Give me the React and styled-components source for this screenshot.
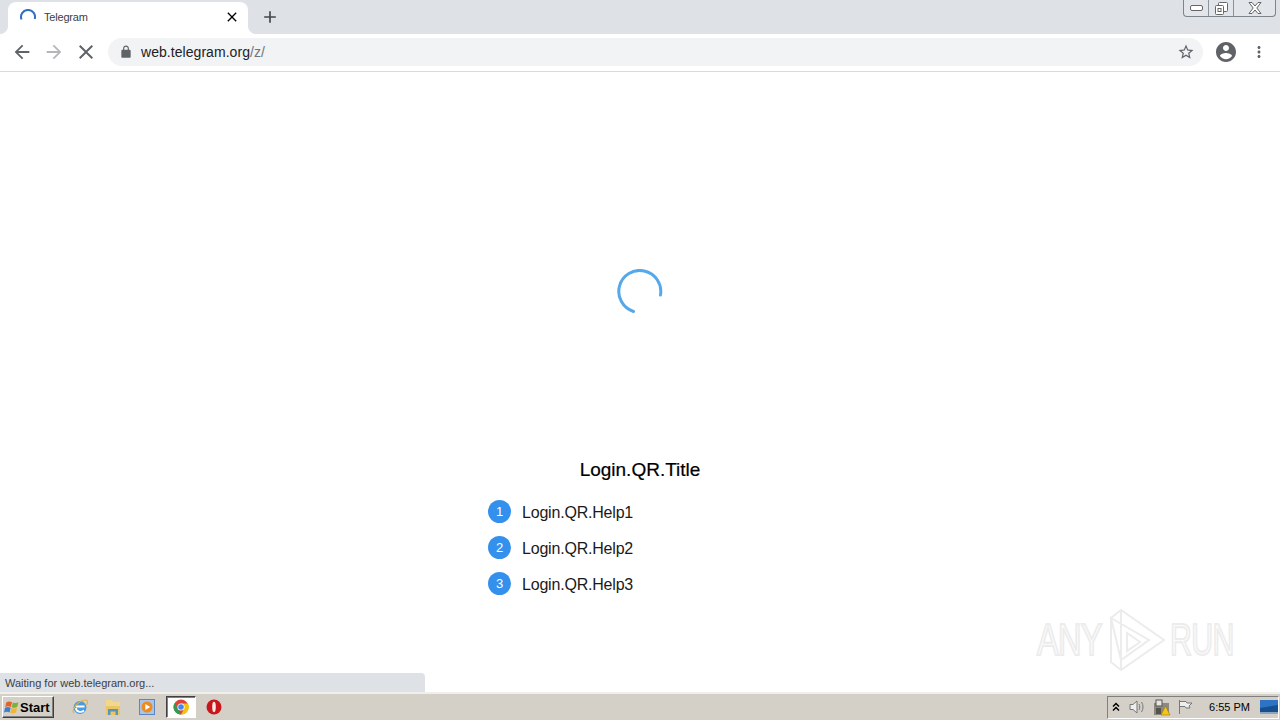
import React from 'react';
import styled, { createGlobalStyle } from 'styled-components';

const GlobalStyle = createGlobalStyle`
  html, body {
    margin: 0;
    padding: 0;
    height: 100%;
    overflow: hidden;
    background: #ffffff;
    font-family: 'Liberation Sans', Arial, sans-serif;
  }
`;

const Screen = styled.div`
  position: relative;
  display: flex;
  flex-direction: column;
  width: 1280px;
  height: 720px;
  overflow: hidden;
`;

const TabStrip = styled.div`
  display: flex;
  align-items: flex-end;
  height: 34px;
  padding-left: 8px;
  background: #dee1e6;
  flex: none;
`;

const Tab = styled.div`
  position: relative;
  display: flex;
  align-items: center;
  width: 240px;
  height: 32px;
  box-sizing: border-box;
  padding: 0 8px 2px 12px;
  background: #ffffff;
  border-radius: 8px 8px 0 0;

  &::before,
  &::after {
    content: '';
    position: absolute;
    bottom: 0;
    width: 8px;
    height: 8px;
  }

  &::before {
    left: -8px;
    background: radial-gradient(circle at 0 0, #dee1e6 7.5px, #ffffff 8.5px);
  }

  &::after {
    right: -8px;
    background: radial-gradient(circle at 100% 0, #dee1e6 7.5px, #ffffff 8.5px);
  }
`;

const TabTitle = styled.span`
  flex: 1;
  margin-left: 8px;
  font-family: 'Liberation Sans', Arial, sans-serif;
  font-size: 11px;
  letter-spacing: -0.2px;
  color: #3c4043;
`;

const NewTab = styled.div`
  display: flex;
  margin: 0 0 7px 12px;
  color: #44474b;
`;

const WindowButtons = styled.div`
  display: flex;
  align-self: flex-start;
  margin-left: auto;
  margin-right: 4px;
  height: 16px;
  border: 1px solid #7d848c;
  border-top: none;
  border-radius: 0 0 4px 4px;
  background: #e2e5ea;
`;

const WindowButton = styled.div`
  display: flex;
  align-items: center;
  justify-content: center;
  width: ${(props) => props.size}px;
  border-left: ${(props) => (props.first ? 'none' : '1px solid #8d939a')};
`;

const Toolbar = styled.div`
  display: flex;
  align-items: center;
  height: 38px;
  box-sizing: border-box;
  padding: 0 0 2px 10px;
  background: #ffffff;
  border-bottom: 1px solid #d9dadc;
  flex: none;
`;

const NavButton = styled.div`
  display: flex;
  align-items: center;
  justify-content: center;
  width: 24px;
  height: 24px;
  margin-right: ${(props) => props.gap || 8}px;
  color: ${(props) => props.color || '#5f6368'};
`;

const Omnibox = styled.div`
  display: flex;
  align-items: center;
  width: 1095px;
  height: 28px;
  margin-left: 2px;
  box-sizing: border-box;
  padding: 0 8px 0 11px;
  background: #f1f3f4;
  border-radius: 14px;
  color: #5f6368;
`;

const Url = styled.span`
  flex: 1;
  margin-left: 8px;
  font-family: 'Liberation Sans', Arial, sans-serif;
  font-size: 14px;
  letter-spacing: 0.05px;
  color: #202124;
`;

const UrlPath = styled.span`
  color: #70757a;
`;

const ToolbarEnd = styled.div`
  display: flex;
  align-items: center;
  margin-left: 11px;
  gap: 12px;
  color: #5f6368;
`;

const Page = styled.main`
  display: flex;
  flex-direction: column;
  align-items: center;
  flex: 1;
  padding-top: 197px;
  background: #ffffff;
`;

const Spinner = styled.div`
  display: flex;
  width: 46px;
  height: 46px;
`;

const QrTitle = styled.h1`
  margin: 142px 0 0;
  font-family: 'Liberation Sans', Arial, sans-serif;
  font-size: 19px;
  line-height: 26px;
  font-weight: 400;
  color: #000000;
  -webkit-text-stroke: 0.2px #000;
`;

const HelpList = styled.ol`
  display: flex;
  flex-direction: column;
  gap: 13px;
  width: 304px;
  margin: 17px 0 0;
  padding: 0;
  list-style: none;
`;

const HelpRow = styled.li`
  display: flex;
  align-items: center;
  height: 23px;
  font-family: 'Liberation Sans', Arial, sans-serif;
  font-size: 16px;
  letter-spacing: -0.2px;
  color: #1a1a1a;
`;

const StepBadge = styled.span`
  display: flex;
  align-items: center;
  justify-content: center;
  width: 23px;
  height: 23px;
  margin-right: 11px;
  border-radius: 50%;
  background: #3390ec;
  color: #ffffff;
  font-size: 13px;
  flex: none;
`;

const HelpText = styled.span`
  position: relative;
  top: 1px;
`;

const StatusBubble = styled.div`
  position: absolute;
  left: 0;
  bottom: 28px;
  display: flex;
  align-items: center;
  width: 425px;
  height: 19px;
  padding-left: 5px;
  box-sizing: border-box;
  background: #dee1e6;
  border-radius: 0 4px 0 0;
  font-family: 'Liberation Sans', Arial, sans-serif;
  font-size: 11px;
  color: #3c4043;
`;

const Watermark = styled.div`
  position: absolute;
  left: 1037px;
  top: 608px;
  display: flex;
  align-items: center;
  height: 64px;
  pointer-events: none;
`;

const WatermarkText = styled.span`
  display: inline-block;
  width: ${(props) => props.width}px;
  font-family: 'Liberation Sans', Arial, sans-serif;
  font-size: 44px;
  line-height: 64px;
  letter-spacing: -1px;
  color: #fbfbfb;
  -webkit-text-stroke: 2px #ececec;
  transform: scaleX(${(props) => props.stretch});
  transform-origin: left center;
  white-space: nowrap;
`;

const WatermarkLogo = styled.svg`
  margin: 0 4px 0 3px;
  flex: none;
`;

const Taskbar = styled.footer`
  display: flex;
  align-items: center;
  height: 28px;
  box-sizing: border-box;
  border-top: 2px solid #f1efe9;
  background: #d4d0c8;
  flex: none;
`;

const StartButton = styled.div`
  display: flex;
  align-items: center;
  width: 52px;
  height: 22px;
  margin-left: 2px;
  box-sizing: border-box;
  padding-left: 1px;
  background: #d4d0c8;
  border: 1px solid;
  border-color: #ffffff #404040 #404040 #ffffff;
  box-shadow: inset -1px -1px 0 #808080;
  font-family: 'Liberation Sans', Arial, sans-serif;
  font-size: 13px;
  font-weight: 700;
  color: #000000;
`;

const QuickLaunch = styled.div`
  display: flex;
  align-items: center;
  margin-left: 10px;
`;

const QuickIcon = styled.div`
  display: flex;
  align-items: center;
  justify-content: center;
  width: ${(props) => props.width || 34}px;
  height: 22px;
  box-sizing: border-box;
  ${(props) =>
    props.active &&
    `
    margin-left: 2px;
    background: #ffffff;
    border: 1px solid;
    border-color: #404040 #ffffff #ffffff #404040;
    box-shadow: inset 1px 1px 0 #808080;
  `}
`;

const Tray = styled.div`
  display: flex;
  align-items: center;
  height: 23px;
  margin-left: auto;
  margin-right: 1px;
  box-sizing: border-box;
  padding-left: 1px;
  border: 1px solid;
  border-color: #808080 #ffffff #ffffff #808080;
`;

const TrayIcon = styled.div`
  display: flex;
  align-items: center;
  justify-content: center;
  width: ${(props) => props.width}px;
`;

const Clock = styled.span`
  margin: 0 10px 0 12px;
  font-family: 'Liberation Sans', Arial, sans-serif;
  font-size: 11px;
  color: #000000;
`;

const MaterialIcon = ({ d, size = 24 }) => (
  <svg width={size} height={size} viewBox="0 0 24 24" fill="currentColor">
    <path d={d} />
  </svg>
);

const ICONS = {
  back: 'M20 11H7.83l5.59-5.59L12 4l-8 8 8 8 1.41-1.41L7.83 13H20v-2z',
  forward: 'M12 4l-1.41 1.41L16.17 11H4v2h12.17l-5.58 5.59L12 20l8-8z',
  close: 'M19 6.41L17.59 5 12 10.59 6.41 5 5 6.41 10.59 12 5 17.59 6.41 19 12 13.41 17.59 19 19 17.59 13.41 12z',
  plus: 'M19 13h-6v6h-2v-6H5v-2h6V5h2v6h6v2z',
  star: 'M22 9.24l-7.19-.62L12 2 9.19 8.63 2 9.24l5.46 4.73L5.82 21 12 17.27 18.18 21l-1.63-7.03L22 9.24zM12 15.4l-3.76 2.27 1-4.28-3.32-2.88 4.38-.38L12 6.1l1.71 4.04 4.38.38-3.32 2.88 1 4.28L12 15.4z',
  account: 'M12 2C6.48 2 2 6.48 2 12s4.48 10 10 10 10-4.48 10-10S17.52 2 12 2zm0 3c1.66 0 3 1.34 3 3s-1.34 3-3 3-3-1.34-3-3 1.34-3 3-3zm0 14.2c-2.5 0-4.71-1.28-6-3.22.03-1.99 4-3.08 6-3.08 1.99 0 5.97 1.09 6 3.08-1.29 1.94-3.5 3.22-6 3.22z',
  menu: 'M12 8c1.1 0 2-.9 2-2s-.9-2-2-2-2 .9-2 2 .9 2 2 2zm0 2c-1.1 0-2 .9-2 2s.9 2 2 2 2-.9 2-2-.9-2-2-2zm0 6c-1.1 0-2 .9-2 2s.9 2 2 2 2-.9 2-2-.9-2-2-2z',
  lock: 'M18 8h-1V6c0-2.76-2.24-5-5-5S7 3.24 7 6v2H6c-1.1 0-2 .9-2 2v10c0 1.1.9 2 2 2h12c1.1 0 2-.9 2-2V10c0-1.1-.9-2-2-2zM9 6c0-1.66 1.34-3 3-3s3 1.34 3 3v2H9V6z',
};

const TabSpinner = () => (
  <svg width="16" height="16" viewBox="0 0 16 16" fill="none">
    <path d="M1.5 10.5A7 7 0 1 1 14.7 10" stroke="#2f6fc4" strokeWidth="2" />
  </svg>
);

const WinFlag = () => (
  <svg width="16" height="16" viewBox="0 0 20 18">
    <path d="M3 3c3-1.5 5-1 7 0L8.500 9c-2-1-4-1.500-7 0z" fill="#e2622a" />
    <path d="M11 3.300c2.500 1 4.500 1 7-.3l-1.500 6c-2.500 1.300-4.500 1.300-7 .3z" fill="#7cb23a" />
    <path d="M1.300 10c3-1.500 5-1 7 0L7 16c-2-1-4-1.500-7 0z" fill="#3c7fd1" />
    <path d="M9.300 10.300c2.500 1 4.500 1 7-.3L15 16c-2.500 1.300-4.500 1.300-7 .3z" fill="#f2b632" />
  </svg>
);

const IeIcon = () => (
  <svg width="18" height="18" viewBox="0 0 18 18" fill="none">
    <circle cx="9" cy="9.500" r="6.500" fill="#4a9be0" />
    <path d="M5 8.500h8.500M5 10c0 4 5 5 8 2.500" stroke="#fff" strokeWidth="1.800" />
    <path d="M3 15C0 12 7 2 15 2c2 0 2 3 .5 5" stroke="#e8b432" strokeWidth="1.200" />
  </svg>
);

const FolderIcon = () => (
  <svg width="16" height="17" viewBox="0 0 16 17">
    <path d="M1 1h6l1 2h7v5H1z" fill="#f3d78a" />
    <path d="M1 7h14v9H1z" fill="#e9c766" />
    <path d="M3 16v-6h10v6h-2.500v-3.500h-5V16z" fill="#5a94b8" />
  </svg>
);

const MediaIcon = () => (
  <svg width="16" height="16" viewBox="0 0 16 16">
    <rect x="0.500" y="0.500" width="15" height="15" fill="#a8c4e6" stroke="#5b86c0" />
    <circle cx="8" cy="8" r="5.500" fill="#ef8a1e" />
    <path d="M6.300 5l5 3-5 3z" fill="#fff" />
  </svg>
);

const ChromeIcon = () => (
  <svg width="16" height="16" viewBox="0 0 16 16">
    <circle cx="8" cy="8" r="7.500" fill="#db4437" />
    <path d="M1.500 4.300L5 10l3 5.500a7.500 7.500 0 0 1-6.500-11.200z" fill="#2f9e52" />
    <path d="M8 4.500h7a7.500 7.500 0 0 1-7 11L11 10z" fill="#f4c20d" />
    <circle cx="8" cy="8" r="3.600" fill="#fff" />
    <circle cx="8" cy="8" r="2.800" fill="#4285f4" />
  </svg>
);

const OperaIcon = () => (
  <svg width="16" height="16" viewBox="0 0 16 16">
    <circle cx="8" cy="8" r="7.500" fill="#c9161c" />
    <ellipse cx="8" cy="8" rx="1.800" ry="5.200" fill="#fbe9e4" />
  </svg>
);

const SpeakerIcon = () => (
  <svg width="18" height="16" viewBox="0 0 18 16" fill="none" stroke="#777">
    <path d="M2 5.500h3l4-3.500v12l-4-3.500H2z" fill="#eee" />
    <path d="M11 5c1 2 1 4 0 6M13.500 3c2 3 2 7 0 10" />
  </svg>
);

const NetworkIcon = () => (
  <svg width="18" height="17" viewBox="0 0 18 17">
    <rect x="1" y="4" width="15" height="12" fill="#8c8a80" />
    <rect x="3" y="1" width="6" height="6" fill="#e8e6e0" stroke="#555" />
    <rect x="3" y="9" width="5" height="6" fill="#55534c" />
    <path d="M12.500 7l4.500 9H8z" fill="#f5c518" stroke="#8a6d00" strokeWidth="0.500" />
  </svg>
);

const FlagIcon = () => (
  <svg width="16" height="16" viewBox="0 0 16 16" fill="none" stroke="#777">
    <path d="M2.500 1v14" />
    <path d="M3 2.500h6l1 1.500h5l-3 3 1 2H9L8 7.500H3" fill="#eee" />
  </svg>
);

const DesktopIcon = () => (
  <svg width="18" height="14" viewBox="0 0 18 14">
    <rect width="18" height="12" fill="#2d74c4" />
    <path d="M0 8l18-3v7H0z" fill="#16508f" />
    <rect y="12" width="18" height="2" fill="#8fa5bd" />
  </svg>
);

const App = () => (
  <Screen>
    <GlobalStyle />
    <TabStrip>
      <Tab>
        <TabSpinner />
        <TabTitle>Telegram</TabTitle>
        <MaterialIcon d={ICONS.close} size={16} />
      </Tab>
      <NewTab>
        <MaterialIcon d={ICONS.plus} size={20} />
      </NewTab>
      <WindowButtons>
        <WindowButton size={24} first>
          <svg width="13" height="6" viewBox="0 0 13 6">
            <rect x="0.500" y="0.500" width="12" height="5" rx="1.500" fill="#fff" stroke="#666" />
          </svg>
        </WindowButton>
        <WindowButton size={24}>
          <svg width="13" height="13" viewBox="0 0 13 13" fill="#fff" stroke="#666">
            <rect x="3.500" y="0.500" width="9" height="9" rx="1" />
            <rect x="0.500" y="3.500" width="8" height="9" rx="1" />
            <rect x="3" y="6.500" width="3" height="3" />
          </svg>
        </WindowButton>
        <WindowButton size={41}>
          <svg width="14" height="12" viewBox="0 0 14 12" fill="#fff" stroke="#666">
            <path d="M1 .500h3L7 4l3-3.500h3L8.800 6 13 11.500h-3L7 8l-3 3.500H1L5.200 6z" />
          </svg>
        </WindowButton>
      </WindowButtons>
    </TabStrip>
    <Toolbar>
      <NavButton>
        <MaterialIcon d={ICONS.back} size={22} />
      </NavButton>
      <NavButton color="#b4b6b9">
        <MaterialIcon d={ICONS.forward} size={22} />
      </NavButton>
      <NavButton gap={8}>
        <MaterialIcon d={ICONS.close} size={24} />
      </NavButton>
      <Omnibox>
        <MaterialIcon d={ICONS.lock} size={14} />
        <Url>
          web.telegram.org<UrlPath>/z/</UrlPath>
        </Url>
        <MaterialIcon d={ICONS.star} size={18} />
      </Omnibox>
      <ToolbarEnd>
        <MaterialIcon d={ICONS.account} size={24} />
        <MaterialIcon d={ICONS.menu} size={18} />
      </ToolbarEnd>
    </Toolbar>
    <Page>
      <Spinner>
        <svg width="46" height="46" viewBox="0 0 46 46" fill="none">
          <path
            d="M16.500 42.500A21 21 0 1 1 43.500 26"
            stroke="#55a8ea"
            strokeWidth="3"
            strokeLinecap="round"
          />
        </svg>
      </Spinner>
      <QrTitle>Login.QR.Title</QrTitle>
      <HelpList>
        {['Login.QR.Help1', 'Login.QR.Help2', 'Login.QR.Help3'].map((text, i) => (
          <HelpRow key={text}>
            <StepBadge>{i + 1}</StepBadge>
            <HelpText>{text}</HelpText>
          </HelpRow>
        ))}
      </HelpList>
    </Page>
    <StatusBubble>Waiting for web.telegram.org...</StatusBubble>
    <Watermark>
      <WatermarkText width={68} stretch={0.74}>ANY</WatermarkText>
      <WatermarkLogo width="58" height="64" viewBox="0 0 58 64" fill="none" stroke="#ececec" strokeWidth="2">
        <path d="M3 10L13 2l43 30-43 30-10-8z" />
        <path d="M3 10l38 22L13 52zM13 2v60" />
        <path d="M19 25l13 9-13 9z" />
      </WatermarkLogo>
      <WatermarkText width={62} stretch={0.69}>RUN</WatermarkText>
    </Watermark>
    <Taskbar>
      <StartButton>
        <WinFlag />
        Start
      </StartButton>
      <QuickLaunch>
        <QuickIcon width={32}><IeIcon /></QuickIcon>
        <QuickIcon><FolderIcon /></QuickIcon>
        <QuickIcon><MediaIcon /></QuickIcon>
        <QuickIcon active width={30}><ChromeIcon /></QuickIcon>
        <QuickIcon width={35}><OperaIcon /></QuickIcon>
      </QuickLaunch>
      <Tray>
        <TrayIcon width={14}>
          <svg width="8" height="10" viewBox="0 0 8 10" fill="none" stroke="#000" strokeWidth="1.500">
            <path d="M1 4.500l3-3 3 3M1 8.500l3-3 3 3" />
          </svg>
        </TrayIcon>
        <TrayIcon width={28}><SpeakerIcon /></TrayIcon>
        <TrayIcon width={22}><NetworkIcon /></TrayIcon>
        <TrayIcon width={24}><FlagIcon /></TrayIcon>
        <Clock>6:55 PM</Clock>
        <DesktopIcon />
      </Tray>
    </Taskbar>
  </Screen>
);

export default App;
